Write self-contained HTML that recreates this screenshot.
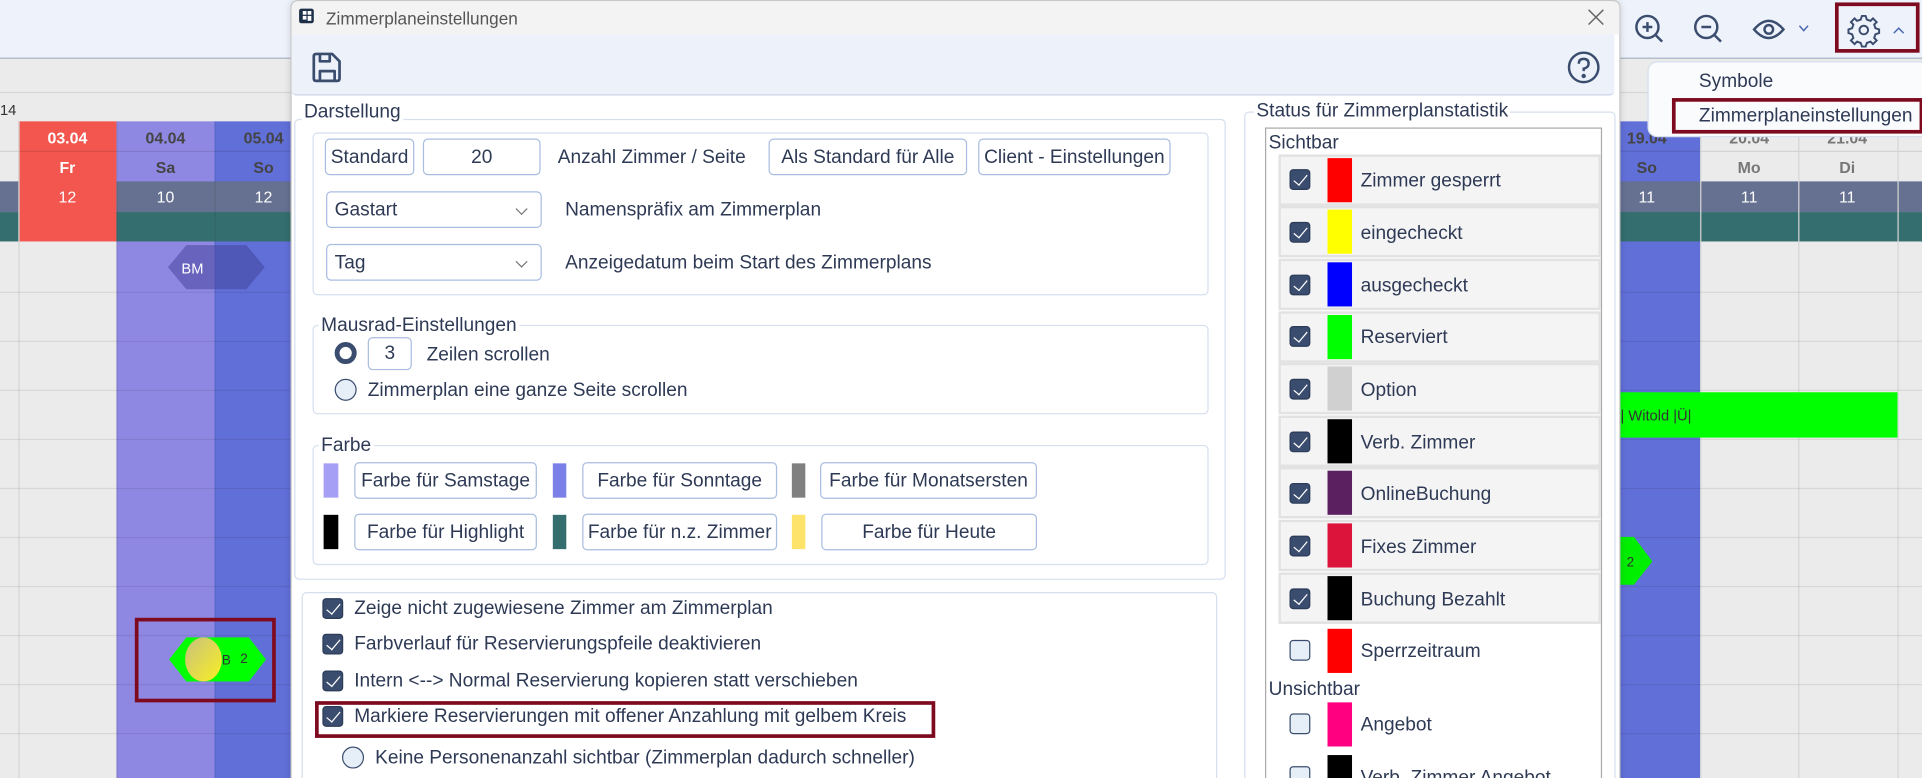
<!DOCTYPE html>
<html><head><meta charset="utf-8">
<style>
*{box-sizing:border-box;margin:0;padding:0}
html,body{width:1922px;height:778px;overflow:hidden;background:#ebebeb}
#w{position:absolute;left:0;top:0;width:1568px;height:635px;transform:scale(1.22577);transform-origin:0 0;font-family:"Liberation Sans",sans-serif;color:#2e3a55;overflow:hidden;background:#ebebeb}
.a{position:absolute}
.t{position:absolute;white-space:nowrap;font-size:15.6px;line-height:20px}
.btn{position:absolute;border:1px solid #a9bde0;border-radius:4px;background:#fff;font-size:15.6px;text-align:center;white-space:nowrap;color:#2e3a55;height:30px;line-height:29px}
.sel{position:absolute;border:1px solid #a9bde0;border-radius:4px;background:#fff;font-size:15.6px;height:30px;line-height:30px;padding-left:6px}
.sel:after{content:"";position:absolute;right:12px;top:10px;width:6px;height:6px;border-right:1px solid #777;border-bottom:1px solid #777;transform:rotate(45deg)}
.grp{position:absolute;border:1px solid #d5dfee;border-radius:4px}
.lg{position:absolute;background:#fff;font-size:15.6px;line-height:20px;padding:0 2px;white-space:nowrap}
.cb{position:absolute;width:17px;height:17px;border-radius:3px;background:#3b4d6e;border:1px solid #2b3b58}
.cb:after{content:"";position:absolute;left:5px;top:1px;width:5px;height:10px;border-right:1.5px solid #fff;border-bottom:1.5px solid #fff;transform:rotate(40deg)}
.cu{position:absolute;width:17px;height:17px;border-radius:3px;background:#e6eef8;border:1px solid #3b4d6e}
.row{position:absolute;left:1043px;width:263px;height:42px;background:#f4f4f4;border:2px solid #e2e2e2}
.sw{position:absolute;width:20px;height:36px}
.gl{position:absolute;height:1px;background:#d7d7d7}
</style></head><body><div id="w">
<div class="a" style="left:0;top:0;width:1568px;height:48px;background:#eef2fa;border-bottom:1px solid #aab3c4"></div>
<div class="a" style="left:0;top:75px;width:1568px;height:1px;background:#d5d5d5"></div>
<div class="t" style="left:0;top:80px;font-size:12px;color:#333">14</div>
<div class="a" style="left:15px;top:99px;width:80px;height:98px;background:#f2564e"></div>
<div class="a" style="left:95px;top:99px;width:80px;height:536px;background:#8f88e3"></div>
<div class="a" style="left:175px;top:99px;width:80px;height:536px;background:#616fd8"></div>
<div class="a" style="left:1300px;top:99px;width:87px;height:536px;background:#616fd8"></div>
<div class="a" style="left:0;top:148px;width:15px;height:25px;background:#667090"></div>
<div class="a" style="left:95px;top:148px;width:160px;height:25px;background:#667090"></div>
<div class="a" style="left:1300px;top:148px;width:268px;height:25px;background:#667090"></div>
<div class="a" style="left:0;top:173px;width:15px;height:24px;background:#356e6e"></div>
<div class="a" style="left:95px;top:173px;width:160px;height:24px;background:#356e6e"></div>
<div class="a" style="left:1300px;top:173px;width:268px;height:24px;background:#356e6e"></div>
<div class="a" style="left:0;top:123px;width:1568px;height:1px;background:rgba(0,0,0,.1)"></div>
<div class="a" style="left:15px;top:99px;width:1px;height:536px;background:#d5d5d5"></div>
<div class="a" style="left:95px;top:99px;width:1px;height:536px;background:rgba(0,0,0,.08)"></div>
<div class="a" style="left:175px;top:99px;width:1px;height:536px;background:rgba(0,0,0,.08)"></div>
<div class="a" style="left:1387px;top:99px;width:1px;height:536px;background:#d5d5d5"></div>
<div class="a" style="left:1467px;top:99px;width:1px;height:536px;background:#d5d5d5"></div>
<div class="a" style="left:1548px;top:99px;width:1px;height:536px;background:#d5d5d5"></div>
<div class="gl" style="left:0;top:238px;width:1568px;background:rgba(0,0,0,.08)"></div>
<div class="gl" style="left:0;top:278px;width:1568px;background:rgba(0,0,0,.08)"></div>
<div class="gl" style="left:0;top:318px;width:1568px;background:rgba(0,0,0,.08)"></div>
<div class="gl" style="left:0;top:358px;width:1568px;background:rgba(0,0,0,.08)"></div>
<div class="gl" style="left:0;top:398px;width:1568px;background:rgba(0,0,0,.08)"></div>
<div class="gl" style="left:0;top:438px;width:1568px;background:rgba(0,0,0,.08)"></div>
<div class="gl" style="left:0;top:478px;width:1568px;background:rgba(0,0,0,.08)"></div>
<div class="gl" style="left:0;top:518px;width:1568px;background:rgba(0,0,0,.08)"></div>
<div class="gl" style="left:0;top:558px;width:1568px;background:rgba(0,0,0,.08)"></div>
<div class="gl" style="left:0;top:598px;width:1568px;background:rgba(0,0,0,.08)"></div>
<div class="t" style="left:15px;width:80px;text-align:center;top:103px;font-size:13px;font-weight:bold;color:#fff">03.04</div>
<div class="t" style="left:15px;width:80px;text-align:center;top:127px;font-size:13px;font-weight:bold;color:#fff">Fr</div>
<div class="t" style="left:15px;width:80px;text-align:center;top:151px;font-size:13px;color:#fff">12</div>
<div class="t" style="left:95px;width:80px;text-align:center;top:103px;font-size:13px;font-weight:bold;color:#444">04.04</div>
<div class="t" style="left:95px;width:80px;text-align:center;top:127px;font-size:13px;font-weight:bold;color:#444">Sa</div>
<div class="t" style="left:95px;width:80px;text-align:center;top:151px;font-size:13px;color:#fff">10</div>
<div class="t" style="left:175px;width:80px;text-align:center;top:103px;font-size:13px;font-weight:bold;color:#444">05.04</div>
<div class="t" style="left:175px;width:80px;text-align:center;top:127px;font-size:13px;font-weight:bold;color:#444">So</div>
<div class="t" style="left:175px;width:80px;text-align:center;top:151px;font-size:13px;color:#fff">12</div>
<div class="t" style="left:1300px;width:87px;text-align:center;top:103px;font-size:13px;font-weight:bold;color:#444">19.04</div>
<div class="t" style="left:1300px;width:87px;text-align:center;top:127px;font-size:13px;font-weight:bold;color:#444">So</div>
<div class="t" style="left:1300px;width:87px;text-align:center;top:151px;font-size:13px;color:#fff">11</div>
<div class="t" style="left:1387px;width:80px;text-align:center;top:103px;font-size:13px;font-weight:bold;color:#777">20.04</div>
<div class="t" style="left:1387px;width:80px;text-align:center;top:127px;font-size:13px;font-weight:bold;color:#777">Mo</div>
<div class="t" style="left:1387px;width:80px;text-align:center;top:151px;font-size:13px;color:#fff">11</div>
<div class="t" style="left:1467px;width:80px;text-align:center;top:103px;font-size:13px;font-weight:bold;color:#777">21.04</div>
<div class="t" style="left:1467px;width:80px;text-align:center;top:127px;font-size:13px;font-weight:bold;color:#777">Di</div>
<div class="t" style="left:1467px;width:80px;text-align:center;top:151px;font-size:13px;color:#fff">11</div>
<svg class="a" style="left:0;top:0" width="1568" height="635">
<polygon points="137,218 152,200 201,200 216,218 201,236 152,236" fill="#3a3a90" fill-opacity=".45"/>
<text x="148" y="223" font-size="12" fill="#fff" font-family="Liberation Sans">BM</text>
<polygon points="138,538 152,520 203,520 217,538 203,556 152,556" fill="#00ff00"/>
<defs><linearGradient id="yg" x1="0" y1="0" x2="1" y2="1"><stop offset="0" stop-color="#c8c080"/><stop offset="1" stop-color="#f8f020"/></linearGradient></defs>
<ellipse cx="166" cy="538" rx="15" ry="18" fill="url(#yg)"/>
<text x="181" y="542" font-size="11" fill="#333" font-family="Liberation Sans">B</text>
<text x="196" y="541" font-size="11" fill="#333" font-family="Liberation Sans">2</text>
<rect x="111.5" y="505.5" width="112" height="66" fill="none" stroke="#7d0a1e" stroke-width="3"/>
<rect x="1322" y="320" width="226" height="37" fill="#00ff00"/>
<text x="1322" y="343" font-size="12" fill="#333" font-family="Liberation Sans">| Witold |Ü|</text>
<polygon points="1322,438 1333,438 1348,458 1333,477 1322,477" fill="#00ee00"/>
<text x="1327" y="462" font-size="11" fill="#333" font-family="Liberation Sans">2</text>
<g fill="none" stroke="#3b4d6e" stroke-width="2">
<circle cx="1344" cy="22" r="9"/><path d="M1351 29l5 5M1340 22h8M1344 18v8"/>
<circle cx="1392" cy="22" r="9"/><path d="M1399 29l5 5M1388 22h8"/>
<path d="M1431 24q12-14 24 0q-12 14-24 0z"/><circle cx="1443" cy="24" r="3.5"/>
<path d="M1468 21l3.5 4 3.5-4" stroke-width="1.2" stroke="#4a68b0"/>
<path d="M1519 13l3 0 1 3 3 1 2-2 3 3-2 2 1 3 3 1v3l-3 1-1 3 2 2-3 3-2-2-3 1-1 3h-3l-1-3-3-1-2 2-3-3 2-2-1-3-3-1v-3l3-1 1-3-2-2 3-3 2 2 3-1z" stroke-width="1.6"/>
<circle cx="1520.5" cy="24.5" r="3.5" stroke-width="1.6"/>
<path d="M1545 27l4-4 4 4" stroke-width="1.2" stroke="#4a68b0"/>
</g>
<rect x="1498.5" y="3.5" width="66" height="38" fill="none" stroke="#7d0a1e" stroke-width="3"/>
</svg>
<div class="a" style="left:1344px;top:50px;width:230px;height:62px;background:#fafbfd;border:1px solid #d5dfee;border-radius:8px"></div>
<div class="t" style="left:1386px;top:57px">Symbole</div>
<div class="t" style="left:1386px;top:85px">Zimmerplaneinstellungen</div>
<div class="a" style="left:1363.5px;top:79.5px;width:205px;height:29px;border:3px solid #7d0a1e"></div>

<div class="a" style="left:237px;top:0;width:1085px;height:640px;background:#fff;border:1px solid #c8c8c8;border-radius:6px 6px 0 0;box-shadow:0 0 6px rgba(0,0,0,.15)"></div>
<div class="a" style="left:238px;top:1px;width:1083px;height:27px;background:#f3f3f3;border-radius:6px 6px 0 0"></div>
<div class="a" style="left:244px;top:7px;width:12px;height:12px;background:#1e3048;border-radius:2px"></div>
<div class="a" style="left:246.5px;top:9px;width:3px;height:3px;background:#fff"></div><div class="a" style="left:250.5px;top:9px;width:3px;height:3px;background:#fff"></div>
<div class="a" style="left:246.5px;top:13px;width:3px;height:3px;background:#fff"></div><div class="a" style="left:250.5px;top:13px;width:3px;height:4px;background:#fff"></div>
<div class="t" style="left:266px;top:5px;font-size:14px;color:#555">Zimmerplaneinstellungen</div>
<svg class="a" style="left:1294px;top:6px" width="16" height="16"><path d="M2 2l12 12M14 2L2 14" stroke="#666" stroke-width="1.2"/></svg>
<div class="a" style="left:238px;top:28px;width:1079px;height:50px;background:#edf1f9;border-bottom:1px solid #c8d4e8;border-radius:0 0 4px 4px"></div>
<svg class="a" style="left:252px;top:40px" width="30" height="30" fill="none" stroke="#3b4d6e" stroke-width="2.2" stroke-linejoin="round">
<path d="M4 6q0-2 2-2h13l6 6v14q0 2-2 2H6q-2 0-2-2z"/><path d="M9 4v6h8V4M9 26v-8h12v8"/></svg>
<svg class="a" style="left:1278px;top:41px" width="28" height="28" fill="none" stroke="#3b4d6e" stroke-width="2"><circle cx="14" cy="14" r="12"/><path d="M10 11q0-4 4-4t4 4q0 3-4 4v2"/><circle cx="14" cy="21" r="0.8" fill="#3b4d6e"/></svg>

<div class="grp" style="left:240px;top:97px;width:760px;height:376px"></div>
<div class="lg" style="left:246px;top:82px">Darstellung</div>
<div class="grp" style="left:255px;top:108px;width:731px;height:133px"></div>
<div class="btn" style="left:265px;top:113px;width:73px">Standard</div>
<div class="btn" style="left:345px;top:113px;width:96px">20</div>
<div class="t" style="left:455px;top:119px">Anzahl Zimmer / Seite</div>
<div class="btn" style="left:627px;top:113px;width:162px">Als Standard für Alle</div>
<div class="btn" style="left:798px;top:113px;width:157px">Client - Einstellungen</div>
<div class="sel" style="left:266px;top:156px;width:176px">Gastart</div>
<div class="t" style="left:461px;top:162px">Namenspräfix am Zimmerplan</div>
<div class="sel" style="left:266px;top:199px;width:176px">Tag</div>
<div class="t" style="left:461px;top:205px">Anzeigedatum beim Start des Zimmerplans</div>

<div class="grp" style="left:255px;top:265px;width:731px;height:73px"></div>
<div class="lg" style="left:260px;top:256px">Mausrad-Einstellungen</div>
<div class="a" style="left:273px;top:279px;width:18px;height:18px;border-radius:50%;border:4.5px solid #3b4d6e;background:#fff"></div>
<div class="btn" style="left:300px;top:275px;width:36px;height:27px;line-height:25px">3</div>
<div class="t" style="left:348px;top:280px">Zeilen scrollen</div>
<div class="a" style="left:273px;top:309px;width:18px;height:18px;border-radius:50%;border:1.5px solid #3b4d6e;background:#e6eef8"></div>
<div class="t" style="left:300px;top:309px">Zimmerplan eine ganze Seite scrollen</div>

<div class="grp" style="left:255px;top:363px;width:731px;height:98px"></div>
<div class="lg" style="left:260px;top:354px">Farbe</div>
<div class="a" style="left:264px;top:378px;width:12px;height:28px;background:#a59ff5"></div>
<div class="btn" style="left:289px;top:377px;width:149px">Farbe für Samstage</div>
<div class="a" style="left:451px;top:378px;width:11px;height:28px;background:#7b80e8"></div>
<div class="btn" style="left:475px;top:377px;width:159px">Farbe für Sonntage</div>
<div class="a" style="left:646px;top:378px;width:11px;height:28px;background:#808080"></div>
<div class="btn" style="left:669px;top:377px;width:177px">Farbe für Monatsersten</div>
<div class="a" style="left:264px;top:420px;width:12px;height:28px;background:#000"></div>
<div class="btn" style="left:289px;top:419px;width:149px">Farbe für Highlight</div>
<div class="a" style="left:451px;top:420px;width:11px;height:28px;background:#356e6e"></div>
<div class="btn" style="left:475px;top:419px;width:159px">Farbe für n.z. Zimmer</div>
<div class="a" style="left:646px;top:420px;width:11px;height:28px;background:#fde36a"></div>
<div class="btn" style="left:670px;top:419px;width:176px">Farbe für Heute</div>

<div class="grp" style="left:246px;top:483px;width:747px;height:160px"></div>
<div class="cb" style="left:263px;top:488px"></div><div class="t" style="left:289px;top:487px">Zeige nicht zugewiesene Zimmer am Zimmerplan</div>
<div class="cb" style="left:263px;top:517px"></div><div class="t" style="left:289px;top:516px">Farbverlauf für Reservierungspfeile deaktivieren</div>
<div class="cb" style="left:263px;top:547px"></div><div class="t" style="left:289px;top:546px">Intern &lt;--&gt; Normal Reservierung kopieren statt verschieben</div>
<div class="cb" style="left:263px;top:576px"></div><div class="t" style="left:289px;top:575px">Markiere Reservierungen mit offener Anzahlung mit gelbem Kreis</div>
<div class="a" style="left:256.5px;top:571.5px;width:506px;height:30px;border:3px solid #7d0a1e"></div>
<div class="a" style="left:279px;top:609px;width:18px;height:18px;border-radius:50%;border:1.5px solid #3b4d6e;background:#e6eef8"></div>
<div class="t" style="left:306px;top:609px">Keine Personenanzahl sichtbar (Zimmerplan dadurch schneller)</div>

<div class="grp" style="left:1015px;top:91px;width:303px;height:560px"></div>
<div class="lg" style="left:1023px;top:81px">Status für Zimmerplanstatistik</div>
<div class="a" style="left:1032px;top:104px;width:275px;height:540px;border:1px solid #aaa;background:#fff"></div>
<div class="t" style="left:1035px;top:107px">Sichtbar</div>
<div class="row" style="top:126px"></div><div class="cb" style="left:1052px;top:138px"></div><div class="sw" style="left:1083px;top:129px;background:#ff0000"></div><div class="t" style="left:1110px;top:138px">Zimmer gesperrt</div>
<div class="row" style="top:168px"></div><div class="cb" style="left:1052px;top:181px"></div><div class="sw" style="left:1083px;top:171px;background:#ffff00"></div><div class="t" style="left:1110px;top:181px">eingecheckt</div>
<div class="row" style="top:211px"></div><div class="cb" style="left:1052px;top:224px"></div><div class="sw" style="left:1083px;top:214px;background:#0000ff"></div><div class="t" style="left:1110px;top:224px">ausgecheckt</div>
<div class="row" style="top:254px"></div><div class="cb" style="left:1052px;top:266px"></div><div class="sw" style="left:1083px;top:257px;background:#00ff00"></div><div class="t" style="left:1110px;top:266px">Reserviert</div>
<div class="row" style="top:296px"></div><div class="cb" style="left:1052px;top:309px"></div><div class="sw" style="left:1083px;top:299px;background:#d0d0d0"></div><div class="t" style="left:1110px;top:309px">Option</div>
<div class="row" style="top:339px"></div><div class="cb" style="left:1052px;top:352px"></div><div class="sw" style="left:1083px;top:342px;background:#000"></div><div class="t" style="left:1110px;top:352px">Verb. Zimmer</div>
<div class="row" style="top:381px"></div><div class="cb" style="left:1052px;top:394px"></div><div class="sw" style="left:1083px;top:384px;background:#5a2060"></div><div class="t" style="left:1110px;top:394px">OnlineBuchung</div>
<div class="row" style="top:424px"></div><div class="cb" style="left:1052px;top:437px"></div><div class="sw" style="left:1083px;top:427px;background:#dc143c"></div><div class="t" style="left:1110px;top:437px">Fixes Zimmer</div>
<div class="row" style="top:467px"></div><div class="cb" style="left:1052px;top:480px"></div><div class="sw" style="left:1083px;top:470px;background:#000"></div><div class="t" style="left:1110px;top:480px">Buchung Bezahlt</div>
<div class="cu" style="left:1052px;top:522px"></div><div class="sw" style="left:1083px;top:513px;background:#ff0000"></div><div class="t" style="left:1110px;top:522px">Sperrzeitraum</div>
<div class="t" style="left:1035px;top:553px">Unsichtbar</div>
<div class="cu" style="left:1052px;top:582px"></div><div class="sw" style="left:1083px;top:573px;background:#ff0080"></div><div class="t" style="left:1110px;top:582px">Angebot</div>
<div class="cu" style="left:1052px;top:625px"></div><div class="sw" style="left:1083px;top:616px;background:#000"></div><div class="t" style="left:1110px;top:625px">Verb. Zimmer Angebot</div>
</div></body></html>
